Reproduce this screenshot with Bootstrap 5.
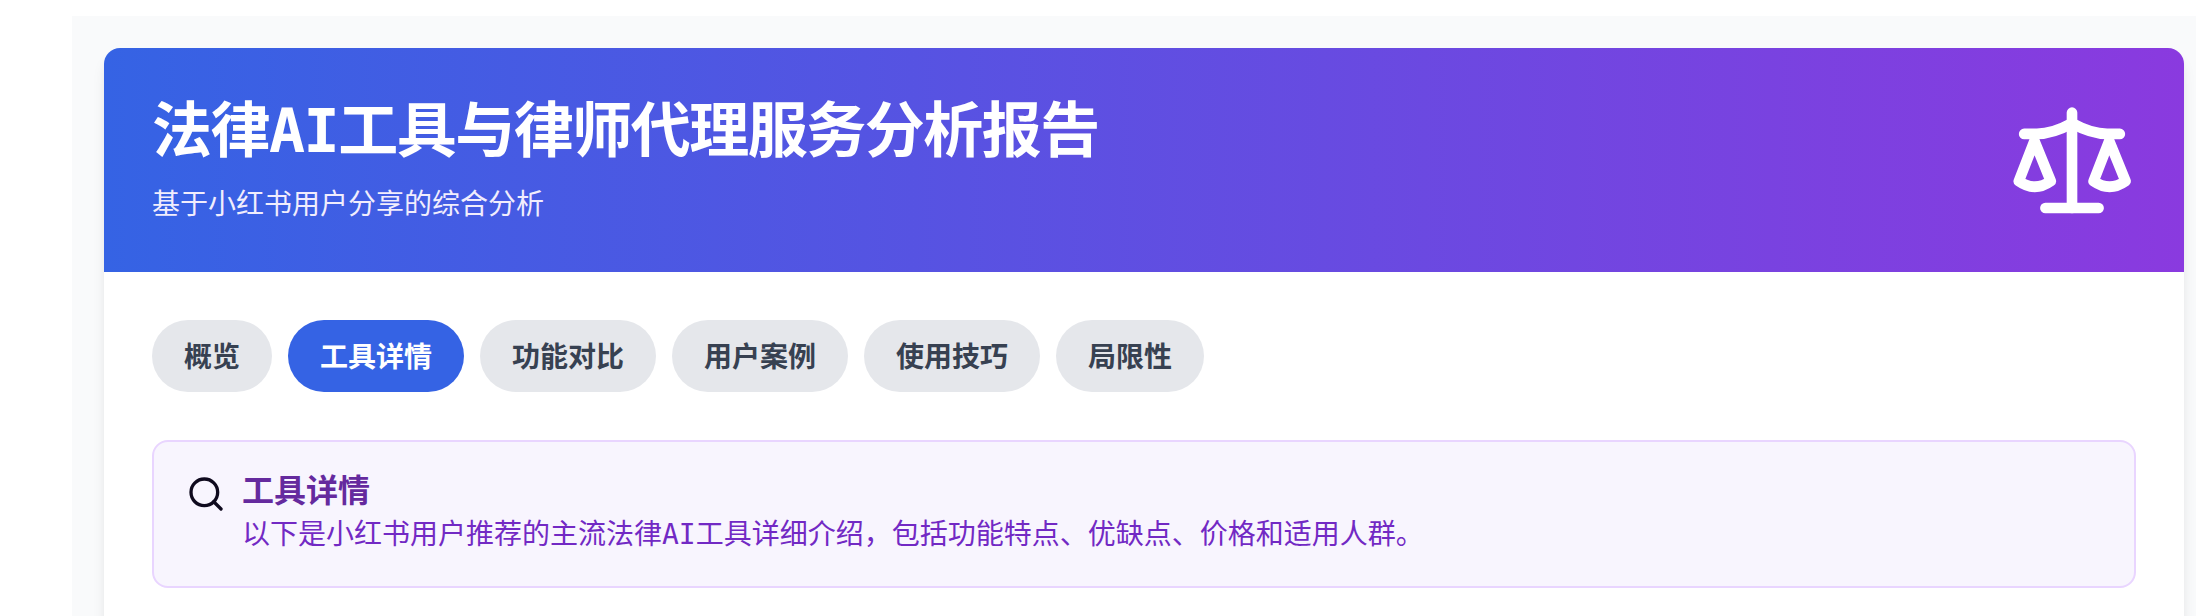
<!DOCTYPE html>
<html lang="zh-CN">
<head>
    <meta charset="UTF-8">
    <meta name="viewport" content="width=device-width, initial-scale=1.0">
    <title>法律AI工具与律师代理服务分析报告</title>
    <link href="https://cdn.jsdelivr.net/npm/bootstrap@5.3.0/dist/css/bootstrap.min.css" rel="stylesheet">
    <style>
        html, body {
            height: 616px;
            overflow: hidden;
            background: #fff;
        }
        .page-panel {
            margin: 16px 0 0 72px;
            padding: 32px 12px 0 32px;
            height: 600px;
            background: #f9fafb;
            overflow: hidden;
        }
        .report-card {
            border: 0;
            border-radius: 16px 16px 0 0;
            background: #fff;
            box-shadow: 0 10px 15px -3px rgba(0, 0, 0, .1), 0 4px 6px -2px rgba(0, 0, 0, .05);
            overflow: hidden;
            min-height: 640px;
        }
        .report-head {
            height: 224px;
            padding: 48px;
            color: #fff;
            background: linear-gradient(90deg, #3563e4, #8a3adf);
        }
        .report-text {
            padding-top: 6px;
        }
        .report-title {
            margin: 0 0 24px;
            font: 700 60px/56px "DejaVu Sans Mono", "Noto Sans CJK SC", monospace;
            letter-spacing: -1.5px;
        }
        .report-sub {
            margin: 0;
            font: 400 28px/40px "Noto Sans", "Noto Sans CJK SC", sans-serif;
            color: #f1edfd;
        }
        .report-body {
            padding: 48px;
        }
        .tab-row {
            gap: 16px;
            margin-bottom: 48px;
        }
        .tab-row .nav-link {
            height: 72px;
            padding: 16px 32px;
            border-radius: 36px;
            background: #e5e7eb;
            color: #374151;
            font: 600 28px/40px "Noto Sans", "Noto Sans CJK SC", sans-serif;
        }
        .tab-row .nav-link.active {
            background: #3563e4;
            color: #fff;
        }
        .info-box {
            height: 148px;
            margin: 0;
            padding: 32px;
            gap: 16px;
            border: 2px solid #e9d5ff;
            border-radius: 16px;
            background: #f8f5fe;
        }
        .info-title {
            margin: 0 0 7px;
            font: 600 32px/34px "DejaVu Sans Mono", "Noto Sans CJK SC", monospace;
            color: #652a9e;
        }
        .info-text {
            margin: 0;
            font: 400 28px/40px "DejaVu Sans Mono", "Noto Sans CJK SC", monospace;
            color: #7229c4;
        }
    </style>
</head>
<body>
    <div class="page-panel">
        <div class="card report-card">
            <!-- Header -->
            <header class="report-head d-flex justify-content-between align-items-center">
                <div class="report-text">
                    <h1 class="report-title">法律AI工具与律师代理服务分析报告</h1>
                    <p class="report-sub">基于小红书用户分享的综合分析</p>
                </div>
                <svg width="126" height="113" viewBox="330 310 378 340" fill="none" stroke="#fff" stroke-width="32" stroke-linecap="round" stroke-linejoin="round" aria-hidden="true">
                    <path d="M516 336V623"/>
                    <path d="M436 623H596"/>
                    <path d="M372 400H410C450 400 485 385 516 368C547 385 582 400 622 400H660"/>
                    <path d="M403 421L356 542Q404 576 452 542Z"/>
                    <path d="M628 421L581 542Q629 576 677 542Z"/>
                </svg>
            </header>

            <div class="report-body">
                <!-- Tabs -->
                <ul class="nav nav-pills tab-row">
                    <li class="nav-item"><a class="nav-link" href="#">概览</a></li>
                    <li class="nav-item"><a class="nav-link active" href="#">工具详情</a></li>
                    <li class="nav-item"><a class="nav-link" href="#">功能对比</a></li>
                    <li class="nav-item"><a class="nav-link" href="#">用户案例</a></li>
                    <li class="nav-item"><a class="nav-link" href="#">使用技巧</a></li>
                    <li class="nav-item"><a class="nav-link" href="#">局限性</a></li>
                </ul>

                <!-- Intro box -->
                <div class="alert info-box d-flex align-items-start" role="alert">
                    <svg class="flex-shrink-0" width="40" height="40" viewBox="0 0 24 24" fill="none" stroke="#0f0a1e" stroke-width="2" stroke-linecap="round" stroke-linejoin="round" aria-hidden="true">
                        <circle cx="11" cy="11" r="8"/>
                        <path d="M21 21l-4.35-4.35"/>
                    </svg>
                    <div>
                        <h2 class="info-title">工具详情</h2>
                        <p class="info-text">以下是小红书用户推荐的主流法律AI工具详细介绍，包括功能特点、优缺点、价格和适用人群。</p>
                    </div>
                </div>
            </div>
        </div>
    </div>
    <script src="https://cdn.jsdelivr.net/npm/bootstrap@5.3.0/dist/js/bootstrap.bundle.min.js"></script>
</body>
</html>
